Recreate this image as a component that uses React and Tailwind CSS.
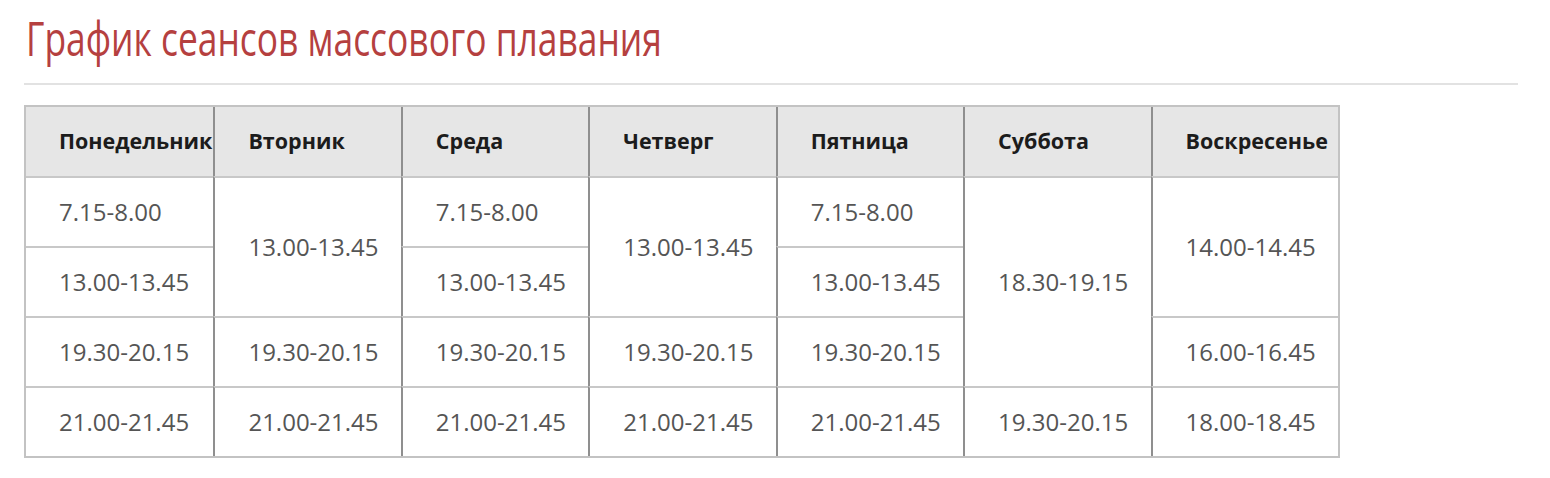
const days = [
  "Понедельник",
  "Вторник",
  "Среда",
  "Четверг",
  "Пятница",
  "Суббота",
  "Воскресенье",
];

// каждая строка: список ячеек { t: текст, rs: rowspan, first: первая колонка }
const rows = [
  [
    { t: "7.15-8.00", first: true },
    { t: "13.00-13.45", rs: 2 },
    { t: "7.15-8.00" },
    { t: "13.00-13.45", rs: 2 },
    { t: "7.15-8.00" },
    { t: "18.30-19.15", rs: 3 },
    { t: "14.00-14.45", rs: 2 },
  ],
  [
    { t: "13.00-13.45", first: true },
    { t: "13.00-13.45" },
    { t: "13.00-13.45" },
  ],
  [
    { t: "19.30-20.15", first: true },
    { t: "19.30-20.15" },
    { t: "19.30-20.15" },
    { t: "19.30-20.15" },
    { t: "19.30-20.15" },
    { t: "16.00-16.45" },
  ],
  [
    { t: "21.00-21.45", first: true },
    { t: "21.00-21.45" },
    { t: "21.00-21.45" },
    { t: "21.00-21.45" },
    { t: "21.00-21.45" },
    { t: "19.30-20.15" },
    { t: "18.00-18.45" },
  ],
];

export default function App() {
  return (
    <div className="w-[1550px] h-[478px] bg-white pl-6 pr-8 pt-[9px]">
      {/* узкого шрифта нет — сжимаем заголовок по ширине */}
      <h1 className="pl-[2px] text-[#b5403f] text-[48px] leading-[58px] font-['Open_Sans',sans-serif] whitespace-nowrap">
        <span className="inline-block origin-left scale-x-[0.737]">
          График сеансов массового плавания
        </span>
      </h1>
      <div className="mt-[16px] h-[2px] bg-[#e2e2e2]" />

      <table className="mt-5 table-fixed w-[1316px] border-separate border-spacing-0 border-2 border-[#c3c3c3] font-['Open_Sans',sans-serif] text-[24px]">
        <thead>
          <tr className="h-[69px] bg-[#e6e6e6]">
            {days.map((d, i) => (
              <th
                key={d}
                className={
                  "pl-[33px] text-left font-bold text-[21.5px] text-[#1c1c1c] whitespace-nowrap overflow-visible " +
                  (i > 0 ? "border-l-2 border-[#8f8f8f]" : "")
                }
              >
                {d}
              </th>
            ))}
          </tr>
        </thead>
        <tbody>
          {rows.map((r, ri) => (
            <tr key={ri} className="h-[70px]">
              {r.map((c, ci) => (
                <td
                  key={ci}
                  rowSpan={c.rs || 1}
                  className={
                    "pl-[33px] text-left text-[#555] border-t-2 border-t-[#c8c8c8] " +
                    (c.first ? "" : "border-l-2 border-l-[#8f8f8f]")
                  }
                >
                  {c.t}
                </td>
              ))}
            </tr>
          ))}
        </tbody>
      </table>
    </div>
  );
}
